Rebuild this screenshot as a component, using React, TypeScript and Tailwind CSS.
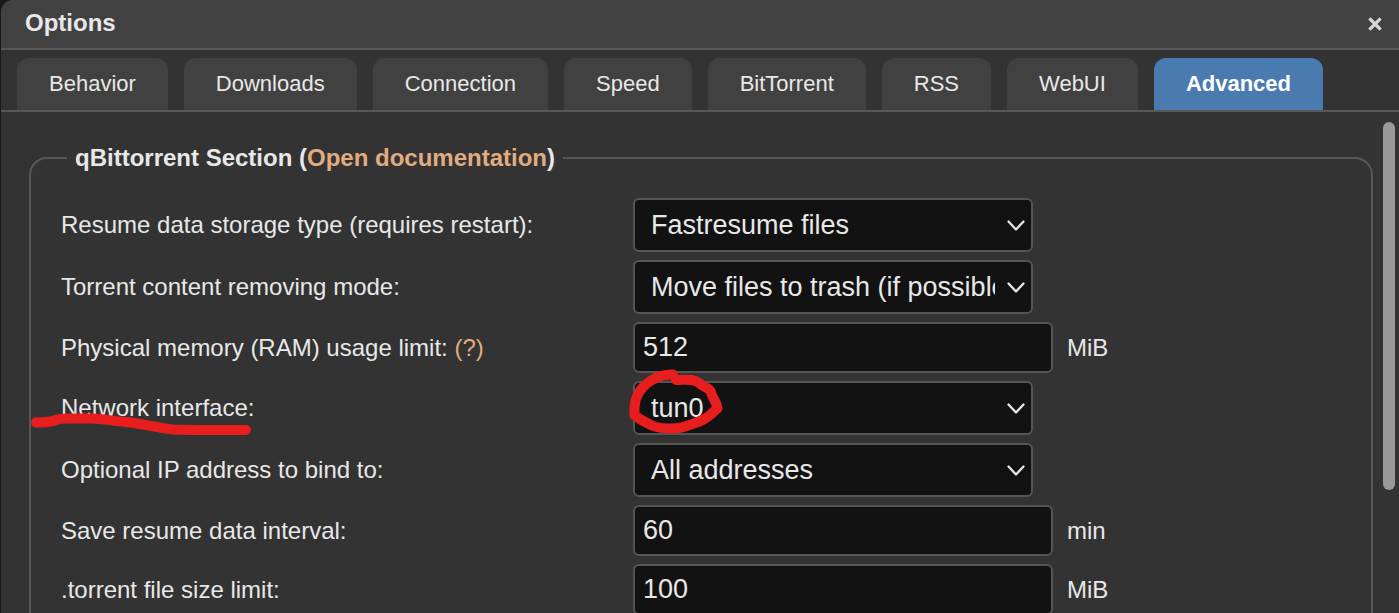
import type { ReactNode } from "react";

const tabs = ["Behavior", "Downloads", "Connection", "Speed", "BitTorrent", "RSS", "WebUI", "Advanced"];

type Field = {
  id: string;
  label: string;
  value: string;
  kind: "select" | "input";
  unit?: string;
  help?: boolean;
  marked?: boolean;
};

const fields: Field[] = [
  { id: "storage", label: "Resume data storage type (requires restart):", value: "Fastresume files", kind: "select" },
  { id: "removing", label: "Torrent content removing mode:", value: "Move files to trash (if possible)", kind: "select" },
  { id: "memory", label: "Physical memory (RAM) usage limit:", value: "512", kind: "input", unit: "MiB", help: true },
  { id: "network", label: "Network interface:", value: "tun0", kind: "select", marked: true },
  { id: "address", label: "Optional IP address to bind to:", value: "All addresses", kind: "select" },
  { id: "interval", label: "Save resume data interval:", value: "60", kind: "input", unit: "min" },
  { id: "size", label: ".torrent file size limit:", value: "100", kind: "input", unit: "MiB" },
];

function Ink({ d, className, viewBox }: { d: string; className: string; viewBox: string }) {
  return (
    <svg aria-hidden="true" viewBox={viewBox} className={`pointer-events-none absolute z-10 ${className}`}>
      <path d={d} fill="none" stroke="#e81e1e" strokeWidth="10" strokeLinecap="round" strokeLinejoin="round" />
    </svg>
  );
}

function SelectBox({ id, value, children }: { id: string; value: string; children?: ReactNode }) {
  return (
    <div className="relative w-[400px]">
      <select
        id={id}
        className="block h-[54px] w-full appearance-none overflow-hidden rounded-md border-2 border-[#555] bg-[#121212] pr-9 pl-4 text-[27px] leading-8 text-[#e8e8e8]"
      >
        <option>{value}</option>
      </select>
      <svg
        aria-hidden="true"
        viewBox="0 0 18 12"
        className="pointer-events-none absolute top-[22px] right-2 h-3 w-[18px]"
      >
        <path d="M1.500 1.500 9 9.500l7.500-8" fill="none" stroke="#e8e8e8" strokeWidth="2.300" strokeLinecap="round" strokeLinejoin="round" />
      </svg>
      {children}
    </div>
  );
}

function Row({ field }: { field: Field }) {
  const { id, label, value, kind, unit, help, marked } = field;
  return (
    <div className="grid grid-cols-[572px_1fr] items-center">
      <div className="relative text-[24px] leading-7">
        <label htmlFor={id}>{label}</label>
        {help && (
          <>
            {" "}
            <a href="#memory-help" className="text-[#e0ac80]">(?)</a>
          </>
        )}
        {marked && (
          <Ink
            viewBox="30 410 226 30"
            className="top-4 -left-[31px] h-[30px] w-[226px]"
            d="M36 422.500C45 422.500 51 422 56 420C61 418 66 418.500 72 418.500H92C103 418.500 112 421 126 422C145 424 157 428 174 429.500C186 430 195 430 210 430H246"
          />
        )}
      </div>
      {kind === "select" ? (
        <SelectBox id={id} value={value}>
          {marked && (
            <Ink
              viewBox="625 365 105 75"
              className="-top-4 -left-2 h-[75px] w-[105px]"
              d="M673 374.500C660 373.500 650 380 643 387C636 395 634 402 634.500 415C640 420 647 423 652 425.500C660 429 673 429 682 427.500C692 424 700 422 706 418C711 415 714 411 717.500 408.500C717 402 712 398 711 392C709 387 704 388 699 383C693 378 686 380 676 380"
            />
          )}
        </SelectBox>
      ) : (
        <div className="flex items-center gap-3.5">
          <input
            id={id}
            type="text"
            defaultValue={value}
            className="block h-[51px] w-[420px] rounded-md border-2 border-[#555] bg-[#121212] px-2 text-[27px] leading-8 text-[#e8e8e8]"
          />
          <span className="text-[24px] leading-7">{unit}</span>
        </div>
      )}
    </div>
  );
}

export default function App() {
  return (
    <div className="h-screen overflow-hidden bg-[#191919] pl-px font-['Liberation_Sans',Arial,sans-serif] text-[#e8e8e8]">
      <section className="flex h-full flex-col overflow-hidden rounded-tl-xl bg-[#333]">
        <header className="flex h-[50px] shrink-0 items-center justify-between border-b-2 border-[#585858] bg-[#414141] pr-4 pb-0.5 pl-6">
          <h1 className="text-[24px] leading-7 font-bold">Options</h1>
          <button type="button" aria-label="Close" className="flex size-4 items-center justify-center">
            <svg viewBox="0 0 16 16" className="size-4">
              <path d="M3.500 4.500l9 9M12.500 4.500l-9 9" stroke="#d6d6d6" strokeWidth="3.200" strokeLinecap="square" />
            </svg>
          </button>
        </header>

        <nav className="flex h-[62px] shrink-0 items-stretch gap-4 border-b-2 border-[#585858] px-4 pt-2">
          {tabs.map((tab) => (
            <button
              key={tab}
              type="button"
              className={
                tab === "Advanced"
                  ? "rounded-t-xl bg-[#497bb0] px-8 text-[22px] leading-7 font-bold text-white"
                  : "rounded-t-xl bg-[#414141] px-8 text-[22px] leading-7"
              }
            >
              {tab}
            </button>
          ))}
        </nav>

        <div className="flex min-h-0 flex-1">
          <main className="min-w-0 flex-1 overflow-hidden pt-8 pr-2.5 pl-7">
            <fieldset className="rounded-[18px] border-2 border-[#585858] px-[30px] pt-[26px] pb-8">
              <legend className="ml-1.5 px-2 text-[24px] leading-7 font-bold">
                qBittorrent Section (
                <a href="#documentation" className="text-[#e0ac80]">Open documentation</a>)
              </legend>
              <div className="flex flex-col gap-2">
                {fields.map((field) => (
                  <Row key={field.id} field={field} />
                ))}
              </div>
            </fieldset>
          </main>
          <div aria-hidden="true" className="w-4 shrink-0 pt-2.5">
            <div className="h-[368px] w-3 rounded-full bg-[#999]" />
          </div>
        </div>
      </section>
    </div>
  );
}
